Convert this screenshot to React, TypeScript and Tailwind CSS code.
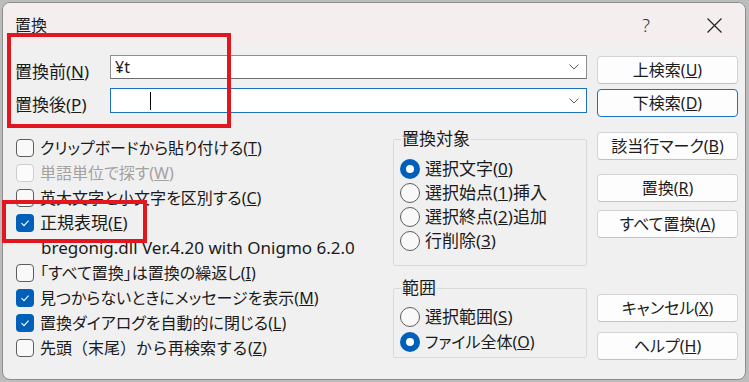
import React from "react";

type Opt = { label: React.ReactNode; checked?: boolean; disabled?: boolean };

function CheckBox({ checked, disabled }: { checked?: boolean; disabled?: boolean }) {
  if (checked) {
    return (
      <span className="ml-[1px] flex h-[18px] w-[18px] shrink-0 items-center justify-center rounded-[4px] bg-[#005fb8]">
        <svg width="12" height="12" viewBox="0 0 12 12">
          <path d="M2.5 6.2 L5 8.6 L9.6 3.6" fill="none" stroke="#fff" strokeWidth="1.1" />
        </svg>
      </span>
    );
  }
  return (
    <span
      className={
        "ml-[1px] h-[18px] w-[18px] shrink-0 rounded-[4px] border " +
        (disabled ? "border-[#cdcdcd] bg-[#fbfbfb]" : "border-[#5d5d5d] bg-[#f9f9f9]")
      }
    />
  );
}

function Radio({ checked }: { checked?: boolean }) {
  if (checked) {
    return (
      <span className="flex h-[20px] w-[20px] shrink-0 items-center justify-center rounded-full bg-[#005fb8]">
        <span className="h-[8px] w-[8px] rounded-full bg-white" />
      </span>
    );
  }
  return <span className="h-[20px] w-[20px] shrink-0 rounded-full border border-[#5d5d5d] bg-[#f9f9f9]" />;
}

function Btn({ children, focus, className = "" }: { children: React.ReactNode; focus?: boolean; className?: string }) {
  return (
    <div
      className={
        "flex h-[28px] w-[141px] items-center justify-center rounded-[4px] border bg-[#fdfdfd] " +
        (focus ? "border-[#1d6fbf]" : "border-[#d4d4d4] border-b-[#c2c2c2]") +
        " " +
        className
      }
    >
      {children}
    </div>
  );
}

function Chevron() {
  return (
    <svg width="10" height="6" viewBox="0 0 10 6" className="ml-auto mr-[7px]">
      <path d="M0.5 0.5 L5 5 L9.5 0.5" fill="none" stroke="#5a5a5a" strokeWidth="1" />
    </svg>
  );
}

const options: Opt[] = [
  { label: <>クリップボードから貼り付ける(<u>T</u>)</> },
  { label: <>単語単位で探す(<u>W</u>)</>, disabled: true },
  { label: <>英大文字と小文字を区別する(<u>C</u>)</> },
  { label: <span className="text-[17px]">正規表現(<u>E</u>)</span>, checked: true },
];

const options2: Opt[] = [
  { label: <>「すべて置換」は置換の繰返し(<u>I</u>)</> },
  { label: <>見つからないときにメッセージを表示(<u>M</u>)</>, checked: true },
  { label: <>置換ダイアログを自動的に閉じる(<u>L</u>)</>, checked: true },
  {
    label: (
      <span className="[font-feature-settings:normal]">
        先頭（末尾）から再検索する<span className="[font-feature-settings:'palt']">(<u>Z</u>)</span>
      </span>
    ),
  },
];

function OptRow({ o }: { o: Opt }) {
  return (
    <div className="flex h-[25px] items-center gap-[6px]">
      <CheckBox checked={o.checked} disabled={o.disabled} />
      <span className={o.disabled ? "text-[#a2a2a2]" : ""}>{o.label}</span>
    </div>
  );
}

export default function App() {
  return (
    <div className="relative h-[382px] w-[749px] overflow-hidden bg-[#bcbcbc] pl-[2px] pt-[2px] font-['Noto_Sans','Noto_Sans_CJK_JP',sans-serif] text-[16px] leading-[24px] text-[#1b1b1b] [font-feature-settings:'palt']">
      <div className="h-[378px] w-[744px] overflow-hidden rounded-[8px] border border-[#8d8d8d] bg-[#f0f0f0]">
        {/* title bar */}
        <div className="flex h-[42px] items-center bg-[#f4eeee] pl-[12px] pt-[2px]">
          <span>置換</span>
          <span className="ml-auto mr-[57px] text-[18px] font-light text-[#333]">?</span>
          <svg width="15" height="15" viewBox="0 0 15 15" className="mr-[23px]">
            <path d="M0.5 0.5 L14.5 14.5 M14.5 0.5 L0.5 14.5" stroke="#222" strokeWidth="1.2" />
          </svg>
        </div>

        {/* search / replace rows */}
        <div className="pl-[12px] pt-[10px]">
          <div className="flex items-start">
            <div className="w-[95px] pt-[5px] text-[17px]">
              置換前(<u>N</u>)
            </div>
            <div className="flex h-[24px] w-[477px] items-center border border-[#8e8e8e] border-b-[#6e6e6e] bg-white pl-[4px]">
              <span>¥t</span>
              <Chevron />
            </div>
            <Btn className="ml-[10px] mt-[1px]">
              上検索(<u>U</u>)
            </Btn>
          </div>
          <div className="mt-[4px] flex items-start">
            <div className="w-[95px] pt-[5px] text-[17px]">
              置換後(<u>P</u>)
            </div>
            <div className="flex h-[25px] w-[477px] items-center border border-[#1d6fbf] bg-white pl-[39px]">
              <span className="h-[18px] w-[1px] bg-black" />
              <Chevron />
            </div>
            <Btn focus className="ml-[10px] mt-[1px]">
              下検索(<u>D</u>)
            </Btn>
          </div>
        </div>

        {/* lower area */}
        <div className="mt-[11px] flex pl-[12px]">
          <div className="w-[378px] pt-[7px]">
            {options.map((o, i) => (
              <OptRow key={i} o={o} />
            ))}
            <div className="flex h-[25px] items-center pl-[26px] text-[17px]">bregonig.dll Ver.4.20 with Onigmo 6.2.0</div>
            {options2.map((o, i) => (
              <OptRow key={i} o={o} />
            ))}
          </div>

          <div className="w-[194px]">
            <fieldset className="h-[138px] rounded-[2px] border border-[#d9d9d9]">
              <legend className="ml-[7px] px-[1px] text-[17px] leading-[22px]">置換対象</legend>
              <div className="mt-[7px] pl-[6px] text-[17px]">
                {[
                  { l: <>選択文字(<u>0</u>)</>, c: true },
                  { l: <>選択始点(<u>1</u>)挿入</> },
                  { l: <>選択終点(<u>2</u>)追加</> },
                  { l: <>行削除(<u>3</u>)</> },
                ].map((r, i) => (
                  <div key={i} className="flex h-[24px] items-center gap-[5px]">
                    <Radio checked={r.c} />
                    <span>{r.l}</span>
                  </div>
                ))}
              </div>
            </fieldset>
            <fieldset className="mt-[11px] h-[81px] rounded-[2px] border border-[#d9d9d9]">
              <legend className="ml-[7px] px-[1px] text-[17px] leading-[22px]">範囲</legend>
              <div className="mt-[5px] pl-[6px]">
                <div className="flex h-[25px] items-center gap-[5px]">
                  <Radio />
                  <span className="text-[17px]">選択範囲(<u>S</u>)</span>
                </div>
                <div className="flex h-[25px] items-center gap-[5px]">
                  <Radio checked />
                  <span>ファイル全体(<u>O</u>)</span>
                </div>
              </div>
            </fieldset>
          </div>

          <div className="ml-[10px] flex w-[141px] flex-col">
            <Btn className="mt-[4px]">
              該当行マーク(<u>B</u>)
            </Btn>
            <Btn className="mt-[14px]">
              置換(<u>R</u>)
            </Btn>
            <Btn className="mt-[8px]">
              すべて置換(<u>A</u>)
            </Btn>
            <Btn className="mt-[56px]">
              キャンセル(<u>X</u>)
            </Btn>
            <Btn className="mt-[10px]">
              ヘルプ(<u>H</u>)
            </Btn>
          </div>
        </div>
      </div>

      {/* red annotation boxes */}
      <div className="absolute left-[7px] top-[33px] h-[95px] w-[224px] border-[4px] border-[#e2161f]" />
      <div className="absolute left-[2px] top-[200px] h-[43px] w-[145px] border-[4px] border-[#e2161f]" />
    </div>
  );
}
